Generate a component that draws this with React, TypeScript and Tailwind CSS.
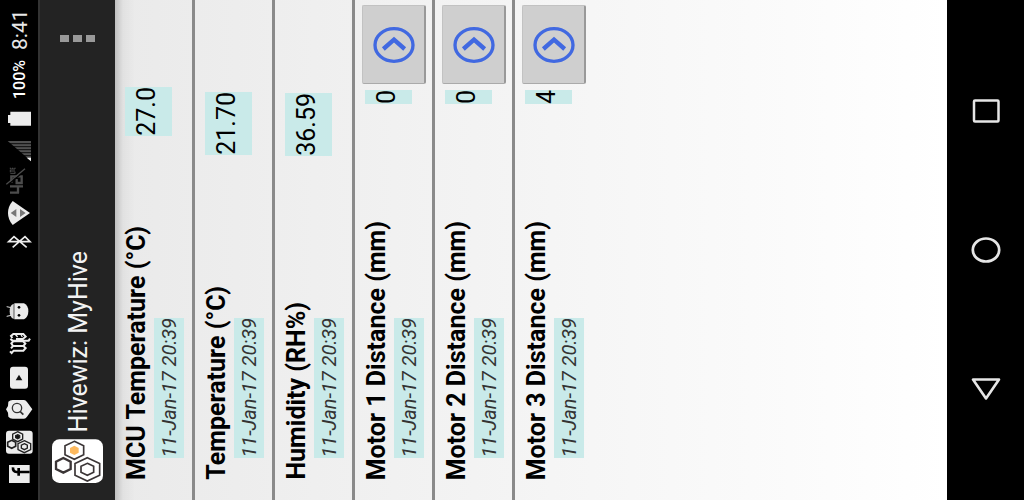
import React from "react";

type Reading = {
  label: string;
  value: string;
  offset: string;
  motor?: boolean;
};

const readings: Reading[] = [
  { label: "MCU Temperature (°C)", value: "27.0", offset: "pt-[87px]" },
  { label: "Temperature (°C)", value: "21.70", offset: "pt-[92px]" },
  { label: "Humidity (RH%)", value: "36.59", offset: "pt-[93px]" },
  { label: "Motor 1 Distance (mm)", value: "0", offset: "pt-[5px]", motor: true },
  { label: "Motor 2 Distance (mm)", value: "0", offset: "pt-[5px]", motor: true },
  { label: "Motor 3 Distance (mm)", value: "4", offset: "pt-[5px]", motor: true },
];

const updated = "11-Jan-17 20:39";

function Sideways({ className = "", children }: { className?: string; children: React.ReactNode }) {
  return (
    <span
      className={`block rotate-180 whitespace-nowrap [text-orientation:sideways] [writing-mode:vertical-rl] ${className}`}
    >
      {children}
    </span>
  );
}

function Hexagon({ cx, cy, rx, ry, ...rest }: { cx: number; cy: number; rx: number; ry: number } & React.SVGProps<SVGPolygonElement>) {
  const points = [
    [cx, cy - ry],
    [cx + rx, cy - ry / 2],
    [cx + rx, cy + ry / 2],
    [cx, cy + ry],
    [cx - rx, cy + ry / 2],
    [cx - rx, cy - ry / 2],
  ]
    .map((p) => p.join(","))
    .join(" ");
  return <polygon points={points} {...rest} />;
}

function StatusBar() {
  return (
    <header className="flex w-10 shrink-0 flex-col justify-between border-r-2 border-[#333] bg-black pt-[10px] pb-[16px] pl-[6px] text-[#e8e8e8]">
      <div className="flex flex-col">
        <Sideways className="ml-[2px] h-10 text-[21px] leading-6">8:41</Sideways>
        <Sideways className="mt-[9px] ml-[2px] h-10 text-[16px] leading-6 font-medium text-white">100%</Sideways>
        <svg className="mt-3 h-[15px] w-[27px]" viewBox="18 333 81 45" fill="#ececec" aria-label="Battery full">
          <path d="M31 335h62v42H31v-8h-7v-24h7z" />
        </svg>
        <svg className="mt-[14px] h-[22px] w-[27px]" viewBox="18 61 81 66" aria-label="Signal">
          <path d="M23 64h70v60z" fill="#505050" />
          <path d="M18 72h75M18 81h75M18 90h75M18 99h75M18 108h75" stroke="#000" strokeWidth="2.5" />
          <path d="M80 114h13v11z" fill="#f5f5f5" />
        </svg>
        <svg className="mt-1 h-[29px] w-[27px]" viewBox="18 139 81 87" fill="none" stroke="#4c4c4c" aria-label="4G LTE off">
          <path d="M30 219h27M54 221v-24M30 200h39M34 190v-20h31v20H50v-12" strokeWidth="7" />
          <path d="M31 161h14M45 162v-6M31 154h14M31 158v-8M31 148h14M31 148v-4M38 148v-4M45 148v-4" strokeWidth="3" />
          <path d="M78 150L22 197" stroke="#000" strokeWidth="4" />
          <path d="M75 147L19 194" strokeWidth="4" />
        </svg>
        <svg className="mt-[5px] h-[26px] w-[27px]" viewBox="18 240 81 78" aria-label="Wi-Fi">
          <path d="M38 243L90 279L38 315Q24 299 24 279Q24 259 38 243z" fill="#ececec" />
          <path d="M32 279l17-12v24zM77 279l-17-12v24z" fill="#777" />
        </svg>
        <svg className="mt-2 h-[15px] w-[27px]" viewBox="18 342 81 45" fill="none" stroke="#ececec" strokeWidth="5" aria-label="Bluetooth">
          <path d="M38 382L75 350L90 365H26L42 350L80 382" />
        </svg>
      </div>

      <div className="flex flex-col gap-[10px]">
        <svg className="h-[19px] w-[27px]" viewBox="18 147 81 57" aria-label="Android">
          <path d="M43 151h29q13 6 13 24t-13 24H43z" fill="#ececec" />
          <path d="M41 152v46q-12-4-12-23t12-23z" fill="#dcdcdc" />
          <path d="M20 161l14 3M20 190l14-3" stroke="#ddd" strokeWidth="3" />
          <circle cx="57" cy="163" r="4" />
          <circle cx="57" cy="187" r="4" />
        </svg>
        <svg className="h-[25px] w-[27px]" viewBox="18 238 81 75" fill="none" stroke="#ececec" aria-label="News">
          <path d="M30 299L35 304L41 297H70L77 289L70 283H39L33 290M39 283L34 275L40 269H69L76 276L70 283" strokeWidth="6" />
          <path d="M31 262L38 267H86L90 261M48 262H68L77 255L70 247H40L33 253L37 259" strokeWidth="6" />
          <path d="M45 247L53 256M62 247L67 256" strokeWidth="4" />
        </svg>
        <svg className="h-[23px] w-[27px]" viewBox="18 340 81 69" aria-label="Video">
          <rect x="30" y="342" width="54" height="66" rx="9" fill="#ececec" />
          <path d="M47 383l10-17l10 17z" fill="#111" />
        </svg>
        <svg className="h-[21px] w-[27px]" viewBox="18 84 81 63" aria-label="Search">
          <path d="M25 92Q30 87 38 87H72Q77 87 81 93L97 115L81 137Q77 143 72 143H38Q30 143 25 137L24 125L18 115L24 105z" fill="#ececec" />
          <circle cx="51" cy="111" r="14" fill="none" stroke="#333" strokeWidth="4" />
          <path d="M60 121l10 10" stroke="#333" strokeWidth="5" />
        </svg>
        <svg className="h-6 w-[27px]" viewBox="18 178 81 72" aria-label="Hivewiz">
          <rect x="18" y="180" width="80" height="69" rx="9" fill="#ececec" />
          <g fill="none" stroke="#222" strokeWidth="4">
            <Hexagon cx={53} cy={198} rx={15} ry={15} />
            <Hexagon cx={53} cy={198} rx={6} ry={6} fill="#111" />
            <Hexagon cx={35} cy={221} rx={12} ry={12} strokeWidth={5} />
            <Hexagon cx={73} cy={228} rx={19} ry={18} />
            <Hexagon cx={73} cy={228} rx={9} ry={9} />
          </g>
        </svg>
        <svg className="h-5 w-[27px]" viewBox="18 285 81 60" aria-label="Facebook">
          <rect x="27" y="288" width="62" height="54" fill="#ececec" />
          <path d="M89 309H50Q38 308 39 295M56 320V297" fill="none" stroke="#000" strokeWidth="8" />
        </svg>
      </div>
    </header>
  );
}

function AppBar() {
  return (
    <div className="flex w-[75px] shrink-0 flex-col items-center justify-between bg-[#232323] pt-[31px] pb-[17px]">
      <button type="button" aria-label="More options" className="flex gap-1 py-1">
        <span className="h-[7px] w-[9px] bg-[#999]" />
        <span className="h-[7px] w-[9px] bg-[#999]" />
        <span className="h-[7px] w-[9px] bg-[#999]" />
      </button>
      <div className="flex flex-col items-center gap-[7px]">
        <h1 className="pl-[2px]">
          <Sideways className="text-[25px] leading-8 text-[#f3f3f3]">Hivewiz: MyHive</Sideways>
        </h1>
        <svg className="h-11 w-[51px]" viewBox="154 206 153 132" aria-label="Hivewiz logo">
          <rect x="154" y="207" width="153" height="131" rx="22" fill="#fff" />
          <g fill="none" stroke="#3b3536" strokeWidth="5">
            <Hexagon cx={221} cy={240} rx={28} ry={27} />
            <Hexagon cx={188} cy={285} rx={22} ry={22} strokeWidth={7} />
            <Hexagon cx={260} cy={297} rx={37} ry={35} />
            <Hexagon cx={260} cy={297} rx={19} ry={18} />
          </g>
          <Hexagon cx={221} cy={240} rx={13} ry={14} fill="#fdb95e" />
        </svg>
      </div>
    </div>
  );
}

function ReadingColumn({ reading, last }: { reading: Reading; last: boolean }) {
  return (
    <li
      className={`flex w-20 shrink-0 flex-col justify-between pb-5 ${reading.offset} ${
        last ? "" : "border-r-[3px] border-[#8a8a8a]"
      }`}
    >
      <div className="flex flex-col gap-[6px]">
        {reading.motor && (
          <button
            type="button"
            aria-label={`Adjust ${reading.label}`}
            className="ml-[7px] flex h-[79px] w-16 items-center justify-center rounded-[2px] border border-r-2 border-[#c2c2c2] border-r-[#999] border-b-[#aaa] bg-[#cfcfcf]"
          >
            <svg className="h-9 w-[42px]" viewBox="0 0 126 108" fill="none" stroke="#4169e1" aria-hidden="true">
              <ellipse cx="63" cy="54" rx="57" ry="49" strokeWidth="10" />
              <path d="M31 66L63 38L95 66" strokeWidth="13" />
            </svg>
          </button>
        )}
        <output className="ml-[10px] block w-[47px] bg-[#c9eae9]">
          <Sideways className="text-[25px] leading-[43px]">{reading.value}</Sideways>
        </output>
      </div>
      <div className="ml-[7px] flex items-end gap-[2px]">
        <h2>
          <Sideways className="text-[25px] leading-[30px] font-bold">{reading.label}</Sideways>
        </h2>
        <time className="mb-[22px] bg-[#c9eae9] text-[#333]">
          <Sideways className="text-[20px] leading-[30px] italic">{updated}</Sideways>
        </time>
      </div>
    </li>
  );
}

function NavBar() {
  const button = "flex flex-1 items-center justify-center";
  return (
    <nav className="flex w-[77px] shrink-0 flex-col bg-black py-[41px]">
      <button type="button" aria-label="Recent apps" className={button}>
        <svg className="h-6 w-7" viewBox="0 0 28 24" fill="none" stroke="#e6e6e6" strokeWidth="2.5">
          <rect x="2" y="1.5" width="24.5" height="21" rx="1" />
        </svg>
      </button>
      <button type="button" aria-label="Home" className={button}>
        <svg className="h-[26px] w-[30px]" viewBox="0 0 30 26" fill="none" stroke="#e6e6e6" strokeWidth="2.7">
          <ellipse cx="15" cy="13" rx="13.2" ry="11.5" />
        </svg>
      </button>
      <button type="button" aria-label="Back" className={button}>
        <svg className="h-6 w-[30px]" viewBox="0 0 30 24" fill="none" stroke="#e6e6e6" strokeWidth="2.6" strokeLinejoin="round">
          <path d="M2 2.5H28L15 21.5z" />
        </svg>
      </button>
    </nav>
  );
}

export default function App() {
  return (
    <div className="flex h-screen overflow-hidden font-['Roboto',sans-serif] text-black">
      <StatusBar />
      <AppBar />
      <main className="flex-1 bg-linear-to-r from-[#eaeaea] to-white">
        <ul className="flex h-full bg-[linear-gradient(to_right,rgba(0,0,0,0.18),rgba(0,0,0,0.04)_8px,transparent_20px)]">
          {readings.map((reading, i) => (
            <ReadingColumn key={reading.label} reading={reading} last={i === readings.length - 1} />
          ))}
        </ul>
      </main>
      <NavBar />
    </div>
  );
}
